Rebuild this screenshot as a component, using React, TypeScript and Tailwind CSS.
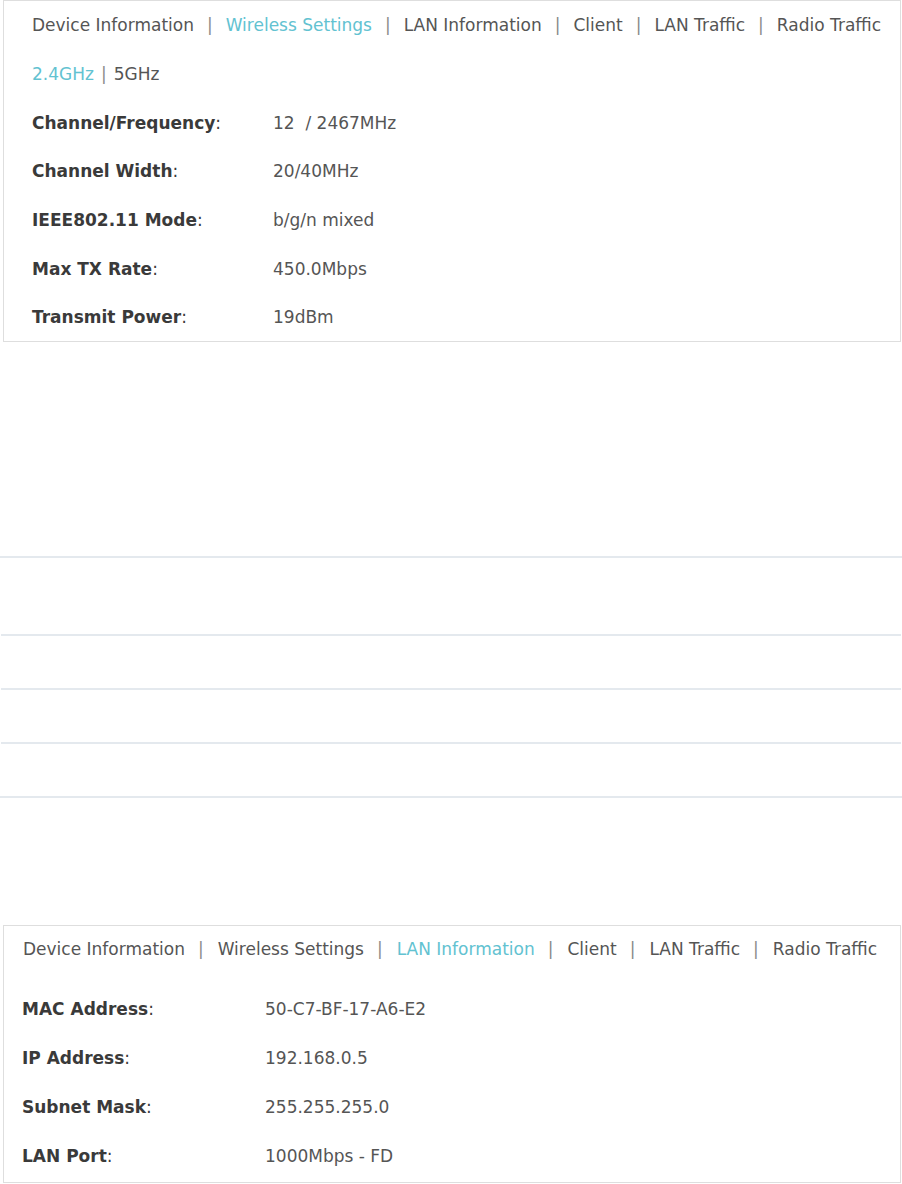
import React from 'react';

const tabs = ['Device Information', 'Wireless Settings', 'LAN Information', 'Client', 'LAN Traffic', 'Radio Traffic'];

function TabBar({ active, className, sep }: { active: string; className: string; sep: string }) {
  return (
    <div className={`flex items-center ${className}`}>
      {tabs.map((t, i) => (
        <React.Fragment key={t}>
          {i > 0 && <span className={`${sep} text-[#8a8a8a]`}>|</span>}
          <span className={t === active ? 'text-[#62c2d1]' : 'text-[#555555]'}>{t}</span>
        </React.Fragment>
      ))}
    </div>
  );
}

function Row({ label, value, h, labelW }: { label: string; value: string; h: string; labelW: string }) {
  return (
    <div className={`flex items-center ${h}`}>
      <div className={`${labelW} shrink-0 text-[#3a3a3a]`}>
        <span className="font-bold">{label}</span>:
      </div>
      <div className="whitespace-pre text-[#555555]">{value}</div>
    </div>
  );
}

export default function App() {
  return (
    <div className="w-[902px] bg-white text-[17px] leading-[24px]" style={{ fontFamily: '"DejaVu Sans", Verdana, sans-serif' }}>
      {/* Wireless settings panel */}
      <div className="ml-[3px] w-[898px] border border-[#dedede] pl-[28px]">
        <TabBar active="Wireless Settings" className="h-[48px]" sep="px-[13px]" />
        <div className="flex h-[49px] items-center">
          <span className="text-[#62c2d1]">2.4GHz</span>
          <span className="mx-[7px] text-[#8a8a8a]">|</span>
          <span className="text-[#555555]">5GHz</span>
        </div>
        <Row label="Channel/Frequency" value="12  / 2467MHz" h="h-[49px]" labelW="w-[241px]" />
        <Row label="Channel Width" value="20/40MHz" h="h-[48px]" labelW="w-[241px]" />
        <Row label="IEEE802.11 Mode" value="b/g/n mixed" h="h-[49px]" labelW="w-[241px]" />
        <Row label="Max TX Rate" value="450.0Mbps" h="h-[49px]" labelW="w-[241px]" />
        <Row label="Transmit Power" value="19dBm" h="h-[48px]" labelW="w-[241px]" />
      </div>

      {/* Empty divider table */}
      <div className="mt-[214px]">
        <div className="h-[2px] bg-[#e4e9ee]" />
        <div className="mx-[1px] mt-[76px] h-[2px] bg-[#e4e9ee]" />
        <div className="mx-[1px] mt-[52px] h-[2px] bg-[#e4e9ee]" />
        <div className="mx-[1px] mt-[52px] h-[2px] bg-[#e4e9ee]" />
        <div className="mt-[52px] h-[2px] bg-[#e4e9ee]" />
      </div>

      {/* LAN information panel */}
      <div className="ml-[3px] mt-[127px] w-[898px] border border-[#dedede] pb-[2px] pl-[18px]">
        <TabBar active="LAN Information" className="h-[46px] pl-[1px]" sep="pl-[13px] pr-[14px]" />
        <div className="mt-[12px]">
          <Row label="MAC Address" value="50-C7-BF-17-A6-E2" h="h-[49px]" labelW="w-[243px]" />
          <Row label="IP Address" value="192.168.0.5" h="h-[49px]" labelW="w-[243px]" />
          <Row label="Subnet Mask" value="255.255.255.0" h="h-[49px]" labelW="w-[243px]" />
          <Row label="LAN Port" value="1000Mbps - FD" h="h-[49px]" labelW="w-[243px]" />
        </div>
      </div>
    </div>
  );
}
